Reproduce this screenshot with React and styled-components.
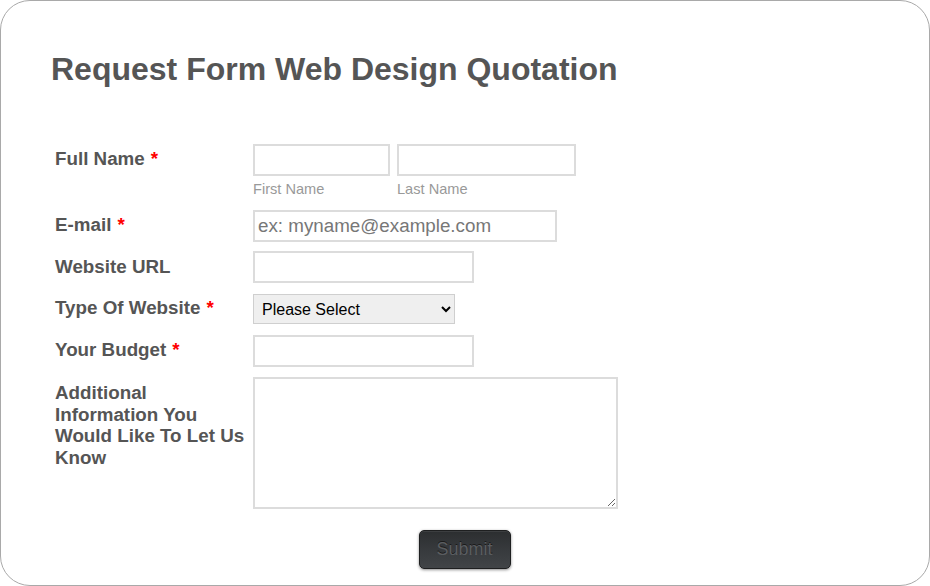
import React from "react";
import styled, { createGlobalStyle } from "styled-components";

const Global = createGlobalStyle`
  html, body { margin: 0; padding: 0; background: #fff; }
  body { font-family: "Liberation Sans", Arial, sans-serif; }
  * { box-sizing: border-box; }
`;

const Card = styled.div`
  width: 930px;
  height: 586px;
  border: 1px solid #a9a9a9;
  border-radius: 30px;
  background: #fff;
  padding: 50px 0 0 0;
  overflow: hidden;
`;

const Title = styled.h1`
  margin: 0 0 0 50px;
  font-size: 32px;
  line-height: 36px;
  font-weight: bold;
  color: #555;
`;

const Form = styled.form`
  margin-top: 57px;
  padding-left: 54px;
  display: flex;
  flex-direction: column;
`;

const Row = styled.div`
  display: grid;
  grid-template-columns: 192px 1fr;
  column-gap: 6px;
  margin-bottom: ${(p) => p.$gap ?? 10}px;
`;

const Label = styled.label`
  font-size: 18.8px;
  line-height: 21.7px;
  font-weight: bold;
  color: #555;
  padding-top: ${(p) => p.$top ?? 4}px;
`;

const Req = styled.span`
  color: #f00;
  margin-left: 6px;
`;

const NameGroup = styled.div`
  display: flex;
  gap: 7px;
`;

const SubField = styled.div`
  display: flex;
  flex-direction: column;
`;

const SubLabel = styled.span`
  margin-top: 5px;
  font-size: 14.6px;
  line-height: 16px;
  color: #999;
`;

const Input = styled.input`
  display: block;
  width: ${(p) => p.$w}px;
  height: 32px;
  border: 2px solid #dcdcdc;
  background: #fff;
  padding: 2px 3px;
  font-family: "Liberation Sans", Arial, sans-serif;
  font-size: 18.8px;
  color: #333;
  outline: none;
  &::placeholder { color: #777; }
`;

const Select = styled.select`
  display: block;
  width: 202px;
  height: 30px;
  border: 1px solid #cfcfcf;
  background: #efefef;
  font-family: "Liberation Sans", Arial, sans-serif;
  font-size: 16px;
  color: #000;
  padding: 0 4px;
  border-radius: 0;
`;

const TextArea = styled.textarea`
  display: block;
  width: 365px;
  height: 132px;
  border: 2px solid #dcdcdc;
  font-family: "Liberation Sans", Arial, sans-serif;
  font-size: 16px;
  resize: both;
  outline: none;
`;

const ButtonBar = styled.div`
  display: flex;
  justify-content: center;
  padding-right: 55px;
  margin-top: 11px;
`;

const Submit = styled.button`
  width: 92px;
  height: 39px;
  border: 1px solid #1e1f20;
  border-radius: 5px;
  background: linear-gradient(#2c2e30, #383b3e 55%, #414447);
  box-shadow: 0 1px 3px rgba(0,0,0,0.45), inset 0 1px 0 rgba(255,255,255,0.08);
  font-family: "Liberation Sans", Arial, sans-serif;
  font-size: 18px;
  color: #5a5d60;
  text-shadow: 0 -1px 0 #1a1a1a;
  padding: 0;
`;

export default function App() {
  return (
    <>
      <Global />
      <Card>
        <Title>Request Form Web Design Quotation</Title>
        <Form onSubmit={(e) => e.preventDefault()}>
          <Row $gap={13}>
            <Label $top={4}>Full Name<Req>*</Req></Label>
            <NameGroup>
              <SubField>
                <Input $w={137} />
                <SubLabel>First Name</SubLabel>
              </SubField>
              <SubField>
                <Input $w={179} />
                <SubLabel>Last Name</SubLabel>
              </SubField>
            </NameGroup>
          </Row>
          <Row $gap={9}>
            <Label>E-mail<Req>*</Req></Label>
            <Input $w={304} placeholder="ex: myname@example.com" />
          </Row>
          <Row $gap={11}>
            <Label $top={5}>Website URL</Label>
            <Input $w={221} />
          </Row>
          <Row $gap={11}>
            <Label $top={3}>Type Of Website<Req>*</Req></Label>
            <Select defaultValue="">
              <option value="">Please Select</option>
              <option>Personal</option>
              <option>Business</option>
              <option>E-commerce</option>
            </Select>
          </Row>
          <Row>
            <Label>Your Budget<Req>*</Req></Label>
            <Input $w={221} />
          </Row>
          <Row>
            <Label $top={5}>Additional Information You Would Like To Let Us Know</Label>
            <TextArea />
          </Row>
          <ButtonBar>
            <Submit type="submit">Submit</Submit>
          </ButtonBar>
        </Form>
      </Card>
    </>
  );
}
